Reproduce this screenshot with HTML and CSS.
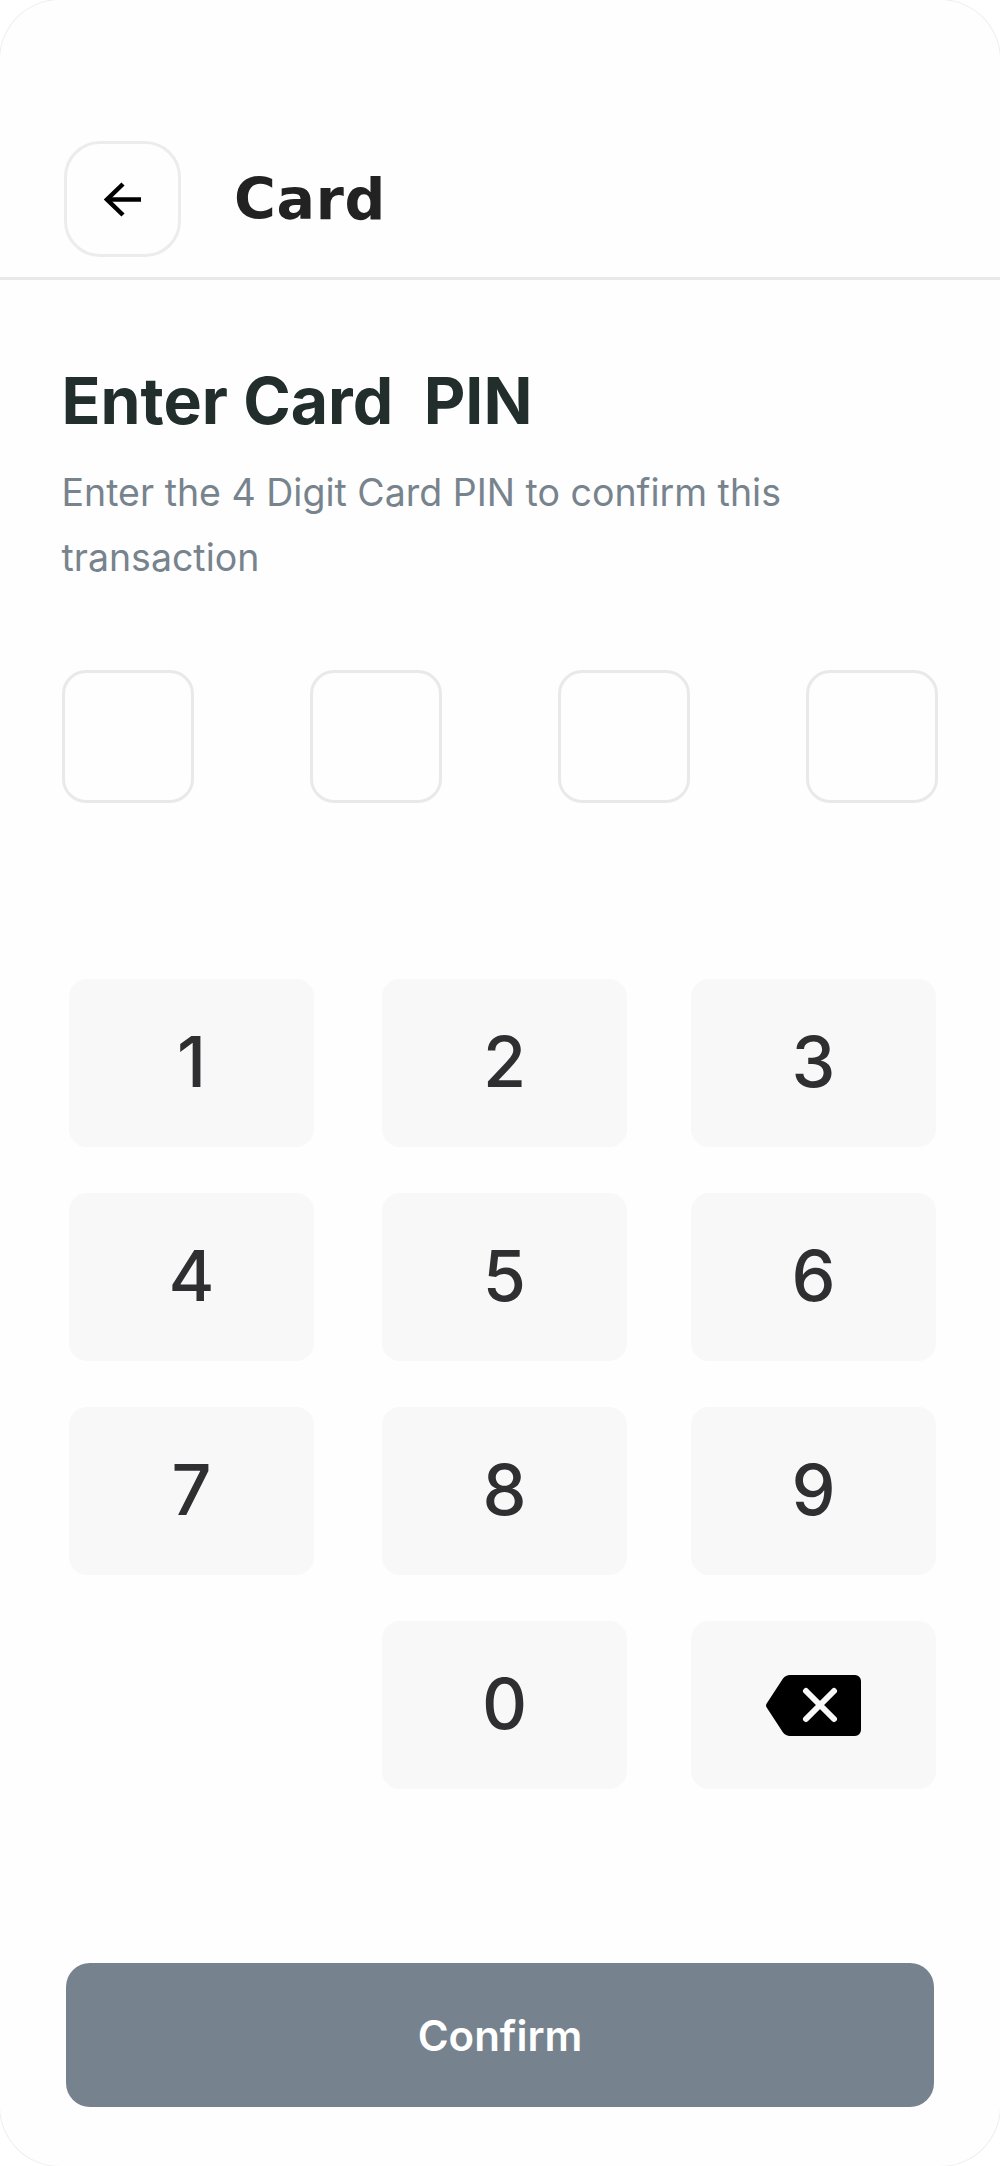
FILE: index.html
```html
<!DOCTYPE html>
<html lang="en">
<head>
    <meta charset="UTF-8">
    <meta name="viewport" content="width=device-width, initial-scale=1.0">
    <title>Card</title>
    <link rel="stylesheet" href="styles.css">
</head>
<body>
    <div class="screen">
        <!-- header -->
        <div class="header">
            <button class="back-btn" type="button" aria-label="Back">
                <svg width="37" height="35" viewBox="0 0 37 35" fill="none" stroke="#000" stroke-width="4.5">
                    <path d="M37 17.5H3"/>
                    <path d="M19 2L3 17.5L19 33"/>
                </svg>
            </button>
            <div class="header-title">Card</div>
        </div>

        <!-- pin entry -->
        <div class="intro">
            <h1>Enter Card &nbsp;PIN</h1>
            <p>Enter the 4 Digit Card PIN to confirm this transaction</p>
        </div>

        <div class="pin-row">
            <div class="pin-box"></div>
            <div class="pin-box"></div>
            <div class="pin-box"></div>
            <div class="pin-box"></div>
        </div>

        <!-- keypad -->
        <div class="keypad">
            <button class="key" type="button">1</button>
            <button class="key" type="button">2</button>
            <button class="key" type="button">3</button>
            <button class="key" type="button">4</button>
            <button class="key" type="button">5</button>
            <button class="key" type="button">6</button>
            <button class="key" type="button">7</button>
            <button class="key" type="button">8</button>
            <button class="key" type="button">9</button>
            <div class="key-empty"></div>
            <button class="key" type="button">0</button>
            <button class="key key-icon" type="button" aria-label="Delete">
                <svg width="95" height="61" viewBox="0 0 95 61">
                    <path fill="#000" d="M24 0H89a6 6 0 0 1 6 6v49a6 6 0 0 1-6 6H24a9 9 0 0 1-7-3.5L1 33a4 4 0 0 1 0-5L17 3.5A9 9 0 0 1 24 0Z"/>
                    <path fill="none" stroke="#f8f8f8" stroke-width="6" stroke-linecap="round" d="M40 16L68 44M68 16L40 44"/>
                </svg>
            </button>
        </div>

        <button class="confirm-btn" type="button">Confirm</button>
    </div>
</body>
</html>
```

FILE: styles.css
```css
* {
    box-sizing: border-box;
}

body {
    margin: 0;
    background: #fff;
    font-family: Inter, 'Liberation Sans', sans-serif;
}

.screen {
    height: 2166px;
    background: #fefefe;
    border-radius: 60px;
    box-shadow: 0 0 0 1px #eee;
}

.header {
    display: flex;
    align-items: center;
    gap: 53px;
    padding: 141px 0 20px 64px;
    border-bottom: 3px solid #e9e9e9;
}

.back-btn {
    display: flex;
    align-items: center;
    justify-content: center;
    width: 117px;
    height: 116px;
    padding: 0;
    background: none;
    border: 3px solid #ececec;
    border-radius: 36px;
}

.header-title {
    font-family: 'DejaVu Sans', sans-serif;
    font-size: 57px;
    font-weight: 700;
    letter-spacing: 0.7px;
    color: #222;
}

.intro {
    padding: 83px 62px 0 61.5px;
}

.intro h1 {
    margin: 0;
    font-size: 64.3px;
    line-height: 76px;
    font-weight: 700;
    color: #222e2c;
}

.intro p {
    margin: 22px 0 0;
    font-size: 37.5px;
    line-height: 64.5px;
    color: #77838d;
}

.pin-row {
    display: flex;
    justify-content: space-between;
    margin-top: 80px;
    padding: 0 62px;
}

.pin-box {
    width: 132px;
    height: 133px;
    border: 3px solid #e9e9e9;
    border-radius: 24px;
}

.keypad {
    display: grid;
    grid-template-columns: 313px 309px 245px;
    grid-auto-rows: 168px;
    row-gap: 46px;
    margin-top: 176px;
    padding-left: 69px;
}

.key {
    display: flex;
    align-items: center;
    justify-content: center;
    width: 245px;
    padding: 0 0 3px;
    background: #f8f8f8;
    border: none;
    border-radius: 18px;
    font-family: inherit;
    font-size: 70px;
    font-weight: 500;
    color: #2f2f31;
}

.key-icon {
    padding: 0;
}

.confirm-btn {
    display: block;
    width: 868px;
    height: 144px;
    margin: 174px 0 0 66px;
    background: #76838e;
    border: none;
    border-radius: 24px;
    font-family: inherit;
    font-size: 42px;
    font-weight: 600;
    color: #fff;
}
```
